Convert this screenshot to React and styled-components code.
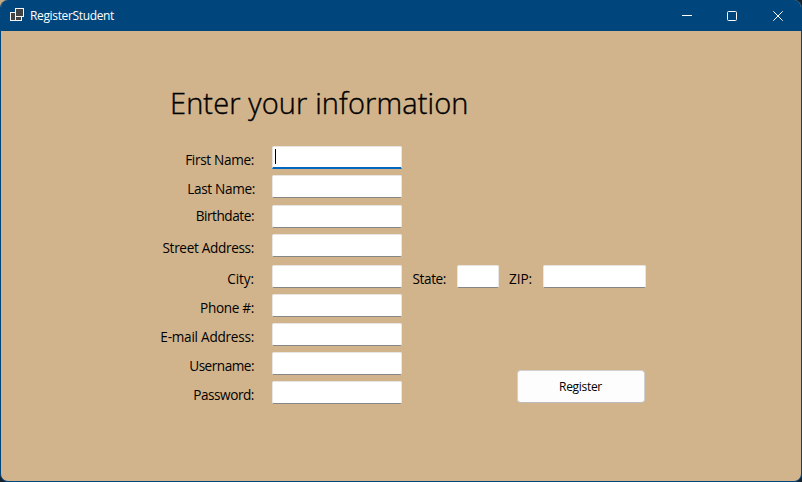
import React from 'react';
import styled, { createGlobalStyle } from 'styled-components';

const GlobalStyle = createGlobalStyle`
  * { box-sizing: border-box; }
  body {
    margin: 0;
    background: #16222c;
    overflow: hidden;
    font-family: "Open Sans", "Noto Sans", sans-serif;
    color: #000;
  }
`;

const Desktop = styled.div`
  width: 802px;
  height: 482px;
  background: linear-gradient(135deg, #c5aa82 0 10px, #16222c 10px);
`;

const Window = styled.div`
  height: 100%;
  display: flex;
  flex-direction: column;
  border: 1px solid #00457c;
  border-top: 0;
  border-radius: 8px;
  overflow: hidden;
  background: #d2b48c;
`;

const TitleBar = styled.header`
  height: 31px;
  flex: none;
  display: flex;
  align-items: center;
  padding-left: 9px;
  margin: 0 -1px;
  background: #00457c;
  color: #fff;
`;

const AppIcon = styled.svg`
  width: 16px;
  height: 16px;
  margin-right: 4px;
  margin-left: 1px;
`;

const WindowTitle = styled.span`
  flex: 1;
  font-size: 12px;
  line-height: 16px;
  letter-spacing: -0.35px;
  padding-top: 1px;
`;

const WindowControl = styled.span`
  width: ${(p) => p.$width || 45}px;
  height: 31px;
  display: flex;
  align-items: center;
  justify-content: center;
`;

const Content = styled.main`
  flex: 1;
  display: flex;
  flex-direction: column;
  padding: 52px 0 0 150px;
`;

const Heading = styled.h1`
  margin: 0 0 23px 19px;
  height: 40px;
  line-height: 40px;
  font-size: 29px;
  font-weight: 300;
  letter-spacing: 0.12px;
  -webkit-text-stroke: 0.4px #000;
  white-space: nowrap;
`;

const Form = styled.form`
  display: flex;
  align-items: flex-start;
  flex-direction: column;
`;

const Row = styled.div`
  display: flex;
  height: 23px;
  margin-bottom: ${(p) => p.$gap || 6}px;
`;

const Label = styled.label`
  width: ${(p) => p.$width || 103}px;
  height: 20px;
  margin-top: ${(p) => (p.$drop ?? 4)}px;
  margin-right: ${(p) => p.$after ?? 18}px;
  display: flex;
  justify-content: flex-end;
  font-size: 13.6px;
  line-height: 20px;
  letter-spacing: ${(p) => p.$tracking ?? -0.33}px;
  white-space: nowrap;
`;

const Field = styled.input`
  width: ${(p) => p.$width || 130}px;
  height: 23px;
  padding: 0 3px;
  border: 1px solid #e8e6e3;
  border-bottom: ${(p) => (p.$active ? '2px solid #0067c0' : '1px solid #868686')};
  border-radius: ${(p) => (p.$active ? '2px 2px 0 0' : '2px')};
  outline: 0;
  background: #fff;
`;

const FieldBox = styled.span`
  position: relative;
  display: flex;
`;

const Caret = styled.span`
  position: absolute;
  left: 3px;
  top: 3px;
  width: 1px;
  height: 15px;
  background: #000;
`;

const RegisterButton = styled.button`
  align-self: flex-start;
  width: 128px;
  height: 33px;
  margin: -11px 0 0 115px;
  padding: 0 1px 0 0;
  border: 1px solid #d0d0d0;
  border-bottom-color: #bcbcbc;
  border-radius: 4px;
  background: #fdfdfd;
  color: #000;
  font-family: inherit;
  font-size: 12px;
  letter-spacing: -0.3px;
`;

const personal = [
  { label: 'First Name:', gap: 6, drop: 4, active: true },
  { label: 'Last Name:', gap: 7, drop: 4, shift: 1 },
  { label: 'Birthdate:', gap: 6, drop: 1, tracking: -0.45 },
  { label: 'Street Address:', gap: 8, drop: 4 },
];

const account = [
  { label: 'Phone #:' },
  { label: 'E-mail Address:', tracking: -0.25 },
  { label: 'Username:', tracking: -0.5 },
];

function FormRow({ label, gap, drop, active, shift = 0, tracking, children }) {
  return (
    <Row $gap={gap}>
      <Label $drop={drop} $tracking={tracking} $width={103 + shift} $after={18 - shift}>{label}</Label>
      <FieldBox>
        <Field $active={active} aria-label={label} />
        {active && <Caret />}
      </FieldBox>
      {children}
    </Row>
  );
}

export default function App() {
  return (
    <>
      <GlobalStyle />
      <Desktop>
        <Window>
          <TitleBar>
            <AppIcon viewBox="0 0 16 16" shapeRendering="crispEdges">
              <path d="M0.5 4.5h5v8h-5z" fill="#414141" stroke="#f4f4f4" />
              <path d="M5.5 8.5h6v4h-6z" fill="#414141" stroke="#f4f4f4" />
              <path d="M5.5 0.5h8v8h-8z" fill="#414141" stroke="#f4f4f4" />
            </AppIcon>
            <WindowTitle>RegisterStudent</WindowTitle>
            <WindowControl>
              <svg width="10" height="10"><path d="M0 4.5h10" stroke="#fff" /></svg>
            </WindowControl>
            <WindowControl>
              <svg width="10" height="10"><rect x=".5" y=".5" width="9" height="9" rx="1" fill="none" stroke="#fff" /></svg>
            </WindowControl>
            <WindowControl $width={48}>
              <svg width="10" height="10"><path d="M.3.3l9.4 9.4M9.7.3L.3 9.7" stroke="#fff" /></svg>
            </WindowControl>
          </TitleBar>
          <Content>
            <Heading>Enter your information</Heading>
            <Form>
              {personal.map((f) => <FormRow key={f.label} {...f} />)}
              <FormRow label="City:" tracking={-0.1}>
                <Label $width={44} $after={11} $tracking={-0.4}>State:</Label>
                <Field $width={42} aria-label="State" />
                <Label $width={33} $after={11} $tracking={-0.1}>ZIP:</Label>
                <Field $width={103} aria-label="ZIP" />
              </FormRow>
              {account.map((f) => <FormRow key={f.label} {...f} />)}
              <FormRow label="Password:" tracking={-0.45}>
                <RegisterButton type="button">Register</RegisterButton>
              </FormRow>
            </Form>
          </Content>
        </Window>
      </Desktop>
    </>
  );
}
